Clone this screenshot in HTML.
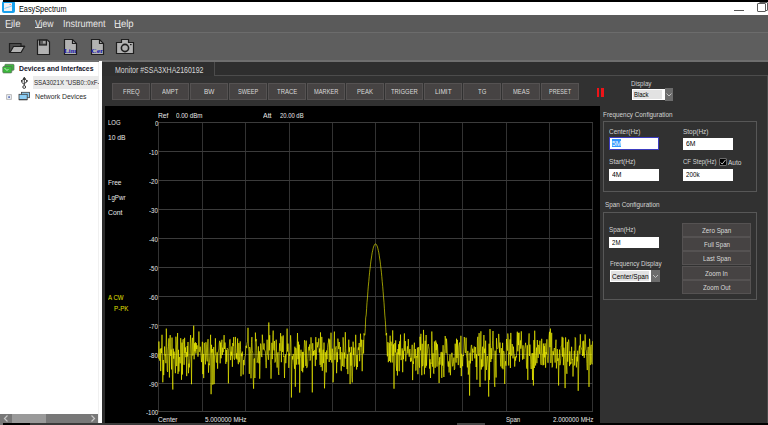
<!DOCTYPE html>
<html><head><meta charset="utf-8"><style>
html,body{margin:0;padding:0}
body{width:768px;height:425px;overflow:hidden;position:relative;background:#333;font-family:"Liberation Sans",sans-serif}
.a{position:absolute}
.t{position:absolute;white-space:pre;line-height:1;transform-origin:0 0;font-family:"Liberation Sans",sans-serif}
.btn{position:absolute;background:#464343;border:1px solid #555252;box-sizing:border-box}
.inp{position:absolute;background:#fff;box-sizing:border-box}
</style></head><body>
<!-- top black strip -->
<!-- title bar -->
<div class="a" style="left:0;top:0;width:768px;height:15px;background:#fff"></div>
<div class="a" style="left:2px;top:1px;width:13px;height:12px;background:#18a0ec;border-radius:2px"></div>
<div class="a" style="left:4px;top:3px;width:8px;height:8px;background:#f2efef"></div>
<svg class="a" style="left:4px;top:3px" width="8" height="8"><path d="M0.5,5.5 L3,4.5 L5,4 L8,2.8" stroke="#6ac0f0" stroke-width="0.8" fill="none"/><rect x="5.5" y="1" width="1.5" height="0.8" fill="#f08080"/></svg>
<div class="a" style="left:734px;top:10px;width:10px;height:1px;background:#555"></div>
<div class="a" style="left:759px;top:2px;width:7px;height:7px;border:1px solid #5a5a5a;border-radius:1px"></div>
<div class="a" style="left:757px;top:3px;width:7px;height:7px;border:1px solid #5a5a5a;background:#fff;border-radius:1px"></div>
<div class="a" style="left:3px;top:0;width:765px;height:2px;background:#000"></div>
<!-- menu bar -->
<div class="a" style="left:0;top:15px;width:768px;height:17px;background:#5a5a5a"></div>
<div class="a" style="left:6px;top:27px;width:6px;height:1px;background:#e0e0e0"></div>
<div class="a" style="left:35px;top:27px;width:7px;height:1px;background:#e0e0e0"></div>
<div class="a" style="left:115px;top:27px;width:6px;height:1px;background:#e0e0e0"></div>
<div class="a" style="left:0;top:32px;width:768px;height:1px;background:#6c6c6c"></div>
<!-- toolbar -->
<div class="a" style="left:0;top:33px;width:768px;height:27px;background:#5e5e5e"></div>
<div class="a" style="left:0;top:60px;width:768px;height:2px;background:#6e6e6e"></div>
<!-- toolbar icons -->
<svg class="a" style="left:0;top:33px" width="140" height="27" viewBox="0 0 140 27">
 <g stroke="#1e1e1e" stroke-width="1.2" fill="#b2b2b2" stroke-linejoin="miter">
  <path d="M9.5,19.5 L9.5,10.5 L21,10.5 L21,13 L24,13 L20.5,19.5 Z" fill="#4a4a4a"/>
  <path d="M10,19.5 L13.5,13.5 L24.5,13.5 L21,19.5 Z"/>
  <path d="M37.5,7 L47.5,7 L49.5,9 L49.5,21.5 L37.5,21.5 Z"/>
  <rect x="39.5" y="7" width="7" height="5" fill="#5c5c5c"/>
  <path d="M64.5,6.5 L72.5,6.5 L76.5,10.5 L76.5,21.5 L64.5,21.5 Z"/>
  <path d="M72.5,6.5 L72.5,10.5 L76.5,10.5" fill="none"/>
  <path d="M91.5,6.5 L99.5,6.5 L103.5,10.5 L103.5,21.5 L91.5,21.5 Z"/>
  <path d="M99.5,6.5 L99.5,10.5 L103.5,10.5" fill="none"/>
  <path d="M116.5,9.5 L121.5,9.5 L121.5,6.5 L128.5,6.5 L128.5,9.5 L133.5,9.5 L133.5,20.5 L116.5,20.5 Z"/>
  <circle cx="125" cy="15" r="3.6" fill="#b2b2b2" stroke-width="1.6"/>
 </g>
 <rect x="43" y="8" width="2.5" height="2.5" fill="#a4a4a4"/>
 <rect x="130" y="11" width="1.6" height="1.2" fill="#1e1e1e"/>
 <text x="64.3" y="20.2" font-family="Liberation Serif" font-weight="700" font-size="6.6" fill="#1616a8" textLength="12" lengthAdjust="spacingAndGlyphs">Lim</text>
 <text x="91.3" y="20.2" font-family="Liberation Serif" font-weight="700" font-size="6.6" fill="#1616a8" textLength="12" lengthAdjust="spacingAndGlyphs">Cer</text>
</svg>
<!-- left panel -->
<div class="a" style="left:0;top:62px;width:98px;height:352px;background:#fff"></div>
<div class="a" style="left:98px;top:62px;width:1px;height:361px;background:#f0f0f0"></div>
<div class="a" style="left:99px;top:61px;width:3px;height:362px;background:#fff"></div>
<div class="a" style="left:33px;top:76px;width:66px;height:13px;background:#ebebeb"></div>
<!-- scrollbar -->
<div class="a" style="left:0;top:414px;width:98px;height:9px;background:#787878"></div>
<div class="a" style="left:12px;top:414px;width:34px;height:9px;background:#9a9a9a"></div>
<svg class="a" style="left:0;top:414px" width="98" height="9"><path d="M7.5,1.5 L4.5,4.5 L7.5,7.5 M91.5,1.5 L94.5,4.5 L91.5,7.5" stroke="#c8c8c8" stroke-width="1.2" fill="none"/></svg>
<!-- tree icons -->
<svg class="a" style="left:0;top:62px" width="34" height="40" viewBox="0 0 34 40">
 <rect x="4.8" y="2.3" width="9.2" height="6" rx="0.8" fill="#3fb43f" stroke="#5a6a5a" stroke-width="0.7"/>
 <rect x="2.8" y="4.5" width="9" height="6.4" rx="0.8" fill="#3cb83c" stroke="#5a6a5a" stroke-width="0.7"/>
 <path d="M4.5,6 L7,8.5 L8.5,7" stroke="#d8f8d8" stroke-width="0.9" fill="none"/>
 <g stroke="#3a3a3a" stroke-width="1" fill="none">
  <path d="M24.3,16.5 L24.3,23.5"/>
  <path d="M22.8,17.5 L24.3,15.2 L25.8,17.5 Z" fill="#3a3a3a"/>
  <path d="M21.8,18.5 L21.8,20.5 L24.3,22.5"/>
  <path d="M26.8,18.5 L26.8,20 L24.3,21.5"/>
  <circle cx="24.2" cy="25" r="1.4"/>
 </g>
 <rect x="21" y="18" width="1.6" height="1.6" fill="#3a3a3a"/>
 <rect x="26" y="18" width="1.6" height="1.6" fill="#3a3a3a"/>
 <rect x="6.7" y="32.7" width="4.6" height="4.6" fill="#eef2f8" stroke="#a8a8a8" stroke-width="0.8"/>
 <rect x="8.2" y="34.3" width="1.8" height="1.6" fill="#5a70b8"/>
 <rect x="21.5" y="30.3" width="8" height="5.4" fill="#8ccdf4" stroke="#3c3c3c" stroke-width="0.8"/>
 <rect x="19" y="32.3" width="8.2" height="5.4" fill="#8ccdf4" stroke="#3c3c3c" stroke-width="0.8"/>
 <rect x="19" y="37.3" width="8.2" height="0.9" fill="#3c3c3c"/>
</svg>
<!-- main dark area -->
<div class="a" style="left:102px;top:62px;width:666px;height:361px;background:#2f2f2f"></div>
<div class="a" style="left:215px;top:62px;width:553px;height:13px;background:#2e2e2e"></div>
<div class="a" style="left:214px;top:62px;width:1px;height:14px;background:#4c4c4c"></div>
<div class="a" style="left:214px;top:75px;width:554px;height:1px;background:#4c4c4c"></div>
<div class="a" style="left:102px;top:76px;width:666px;height:347px;background:#313131"></div>
<div class="a" style="left:102px;top:106px;width:3px;height:317px;background:#2c2c2c"></div>
<div class="a" style="left:767px;top:76px;width:1px;height:347px;background:#4a4a4a"></div>
<!-- buttons -->
<div class="btn" style="left:112px;top:83px;width:38px;height:17px"></div>
<div class="btn" style="left:151px;top:83px;width:38px;height:17px"></div>
<div class="btn" style="left:190px;top:83px;width:38px;height:17px"></div>
<div class="btn" style="left:229px;top:83px;width:38px;height:17px"></div>
<div class="btn" style="left:268px;top:83px;width:38px;height:17px"></div>
<div class="btn" style="left:307px;top:83px;width:38px;height:17px"></div>
<div class="btn" style="left:346px;top:83px;width:38px;height:17px"></div>
<div class="btn" style="left:385px;top:83px;width:38px;height:17px"></div>
<div class="btn" style="left:424px;top:83px;width:38px;height:17px"></div>
<div class="btn" style="left:463px;top:83px;width:38px;height:17px"></div>
<div class="btn" style="left:502px;top:83px;width:38px;height:17px"></div>
<div class="btn" style="left:541px;top:83px;width:38px;height:17px"></div>
<!-- pause -->
<div class="a" style="left:597px;top:88px;width:2px;height:9px;background:#ee1418"></div>
<div class="a" style="left:601px;top:88px;width:3px;height:9px;background:#ee1418"></div>
<!-- display combo -->
<div class="a" style="left:632px;top:89px;width:33px;height:11px;background:#fff"></div>
<div class="a" style="left:633px;top:90px;width:29px;height:9px;background:#e2e2e2"></div>
<div class="a" style="left:665px;top:88px;width:8px;height:13px;background:#6c6c6c"></div>
<svg class="a" style="left:665px;top:88px" width="8" height="13"><path d="M1.5,5.5 L4,8 L6.5,5.5" stroke="#c8c8c8" stroke-width="0.9" fill="none"/></svg>
<svg class="a" style="left:105px;top:106px" width="495" height="317" viewBox="0 0 495 317">
<rect width="495" height="317" fill="#000"/>
<g fill="#3b3b3b"><rect x="53" y="16" width="1" height="290" fill="#323232"/><rect x="97" y="16" width="1" height="290" fill="#323232"/><rect x="140" y="16" width="1" height="290" fill="#323232"/><rect x="184" y="16" width="1" height="290" fill="#323232"/><rect x="227" y="16" width="1" height="290" fill="#323232"/><rect x="270" y="16" width="1" height="290" fill="#323232"/><rect x="314" y="16" width="1" height="290" fill="#323232"/><rect x="357" y="16" width="1" height="290" fill="#323232"/><rect x="401" y="16" width="1" height="290" fill="#323232"/><rect x="444" y="16" width="1" height="290" fill="#323232"/><rect x="487" y="16" width="1" height="290" fill="#323232"/><rect x="53" y="16" width="435" height="1"/><rect x="53" y="45" width="435" height="1"/><rect x="53" y="74" width="435" height="1"/><rect x="53" y="103" width="435" height="1"/><rect x="53" y="132" width="435" height="1"/><rect x="53" y="161" width="435" height="1"/><rect x="53" y="190" width="435" height="1"/><rect x="53" y="219" width="435" height="1"/><rect x="53" y="248" width="435" height="1"/><rect x="53" y="277" width="435" height="1"/><rect x="53" y="305" width="435" height="1"/></g>
<polyline fill="none" stroke="#ffff00" stroke-width="0.6" stroke-linejoin="round" points="53.5,252.7 53.9,235.5 54.4,251.6 54.8,254.7 55.2,242.9 55.7,265.1 56.1,242.1 56.5,247.2 57.0,228.8 57.4,248.9 57.8,276.3 58.3,254.0 58.7,269.1 59.1,256.9 59.6,240.5 60.0,249.4 60.5,248.5 60.9,257.2 61.3,222.6 61.8,240.6 62.2,264.4 62.6,265.9 63.1,244.1 63.5,240.3 63.9,232.4 64.4,271.5 64.8,236.5 65.2,229.1 65.7,249.9 66.1,243.6 66.5,263.4 67.0,231.6 67.4,268.8 67.8,283.5 68.3,242.7 68.7,252.7 69.1,245.6 69.6,249.3 70.0,258.9 70.4,267.2 70.9,230.7 71.3,238.1 71.7,260.1 72.2,239.9 72.6,227.0 73.0,267.9 73.5,243.8 73.9,265.5 74.4,251.8 74.8,251.0 75.2,257.3 75.7,232.2 76.1,239.2 76.5,273.8 77.0,236.6 77.4,268.5 77.8,234.1 78.3,233.2 78.7,238.3 79.1,258.8 79.6,231.8 80.0,246.8 80.4,241.4 80.9,251.2 81.3,246.1 81.7,270.1 82.2,240.0 82.6,250.5 83.0,236.0 83.5,267.2 83.9,257.7 84.3,261.4 84.8,252.2 85.2,237.8 85.6,229.1 86.1,247.3 86.5,278.2 87.0,236.5 87.4,231.8 87.8,249.6 88.3,245.7 88.7,219.7 89.1,253.3 89.6,237.2 90.0,245.4 90.4,236.2 90.9,247.6 91.3,237.1 91.7,243.0 92.2,239.4 92.6,250.0 93.0,250.7 93.5,249.4 93.9,225.5 94.3,245.8 94.8,245.5 95.2,240.7 95.6,244.8 96.1,251.0 96.5,256.1 96.9,247.0 97.4,235.8 97.8,268.1 98.2,247.9 98.7,272.1 99.1,236.8 99.6,237.7 100.0,248.4 100.4,258.4 100.9,236.2 101.3,238.4 101.7,251.8 102.2,255.4 102.6,240.2 103.0,233.2 103.5,266.7 103.9,257.5 104.3,259.2 104.8,250.0 105.2,240.7 105.6,228.8 106.1,288.2 106.5,238.8 106.9,246.6 107.4,243.0 107.8,278.7 108.2,257.3 108.7,241.1 109.1,278.1 109.5,249.9 110.0,248.8 110.4,232.3 110.8,247.6 111.3,256.4 111.7,256.5 112.1,246.4 112.6,262.7 113.0,247.1 113.5,244.6 113.9,243.0 114.3,236.8 114.8,234.8 115.2,257.3 115.6,236.5 116.1,252.3 116.5,238.5 116.9,233.8 117.4,249.0 117.8,241.7 118.2,246.2 118.7,237.2 119.1,229.1 119.5,243.0 120.0,236.5 120.4,239.8 120.8,257.9 121.3,244.0 121.7,255.8 122.1,242.1 122.6,242.6 123.0,243.1 123.4,277.3 123.9,246.0 124.3,240.6 124.7,233.6 125.2,233.3 125.6,254.1 126.1,245.7 126.5,249.5 126.9,240.4 127.4,260.8 127.8,237.1 128.2,240.1 128.7,231.1 129.1,252.2 129.5,253.7 130.0,250.8 130.4,230.9 130.8,242.5 131.3,252.6 131.7,247.3 132.1,253.6 132.6,232.5 133.0,256.4 133.4,258.2 133.9,237.1 134.3,256.3 134.7,250.3 135.2,235.4 135.6,243.5 136.0,270.2 136.5,247.5 136.9,250.2 137.3,245.6 137.8,254.8 138.2,268.5 138.6,254.0 139.1,259.2 139.5,254.0 140.0,249.8 140.4,249.5 140.8,240.0 141.3,239.7 141.7,242.1 142.1,237.0 142.6,235.6 143.0,221.8 143.4,238.0 143.9,245.8 144.3,267.9 144.7,241.0 145.2,243.0 145.6,247.6 146.0,272.3 146.5,236.4 146.9,231.1 147.3,244.5 147.8,247.5 148.2,273.3 148.6,282.7 149.1,253.1 149.5,252.4 149.9,272.0 150.4,226.6 150.8,235.3 151.2,233.1 151.7,244.2 152.1,256.7 152.6,254.6 153.0,251.0 153.4,240.4 153.9,257.3 154.3,245.3 154.7,272.7 155.2,254.7 155.6,237.6 156.0,239.5 156.5,249.9 156.9,251.1 157.3,228.7 157.8,236.4 158.2,243.6 158.6,241.9 159.1,237.4 159.5,244.1 159.9,244.2 160.4,246.0 160.8,256.6 161.2,262.1 161.7,249.5 162.1,233.7 162.5,248.4 163.0,248.6 163.4,253.8 163.8,216.5 164.3,244.3 164.7,229.2 165.1,245.3 165.6,259.8 166.0,272.7 166.5,261.1 166.9,236.8 167.3,253.1 167.8,231.2 168.2,224.6 168.6,242.1 169.1,244.4 169.5,235.0 169.9,256.5 170.4,255.5 170.8,250.6 171.2,233.7 171.7,251.1 172.1,261.6 172.5,248.8 173.0,246.3 173.4,265.5 173.8,268.9 174.3,244.6 174.7,237.3 175.1,244.9 175.6,227.1 176.0,236.8 176.4,256.2 176.9,230.4 177.3,234.4 177.7,246.0 178.2,229.4 178.6,250.9 179.1,250.1 179.5,272.0 179.9,254.1 180.4,248.3 180.8,257.2 181.2,251.8 181.7,243.6 182.1,222.6 182.5,245.5 183.0,237.6 183.4,243.3 183.8,261.9 184.3,247.6 184.7,249.7 185.1,244.7 185.6,229.3 186.0,236.1 186.4,291.5 186.9,258.6 187.3,250.1 187.7,253.5 188.2,247.9 188.6,249.8 189.0,256.2 189.5,262.8 189.9,240.7 190.3,280.8 190.8,242.1 191.2,244.0 191.7,258.7 192.1,242.1 192.5,227.0 193.0,253.2 193.4,235.7 193.8,258.5 194.3,238.7 194.7,286.6 195.1,252.5 195.6,247.6 196.0,243.7 196.4,248.5 196.9,265.0 197.3,245.9 197.7,266.3 198.2,245.9 198.6,261.6 199.0,246.6 199.5,234.2 199.9,236.3 200.3,242.4 200.8,259.9 201.2,234.6 201.6,261.8 202.1,261.6 202.5,260.1 202.9,252.6 203.4,242.7 203.8,240.8 204.2,244.4 204.7,238.4 205.1,254.6 205.6,252.4 206.0,231.3 206.4,242.4 206.9,243.1 207.3,286.4 207.7,237.2 208.2,249.7 208.6,245.0 209.0,249.1 209.5,244.2 209.9,244.2 210.3,260.1 210.8,231.1 211.2,253.7 211.6,246.1 212.1,236.2 212.5,241.3 212.9,239.9 213.4,237.9 213.8,232.4 214.2,246.5 214.7,242.5 215.1,258.9 215.5,226.4 216.0,261.1 216.4,258.7 216.8,230.9 217.3,264.8 217.7,249.1 218.2,243.7 218.6,257.1 219.0,236.6 219.5,282.3 219.9,270.9 220.3,246.2 220.8,251.3 221.2,266.4 221.6,244.5 222.1,253.2 222.5,241.8 222.9,238.0 223.4,236.2 223.8,232.5 224.2,256.0 224.7,233.5 225.1,242.5 225.5,254.1 226.0,226.7 226.4,248.7 226.8,256.5 227.3,242.7 227.7,246.4 228.1,276.3 228.6,264.0 229.0,239.0 229.4,225.6 229.9,253.8 230.3,243.9 230.7,241.6 231.2,240.3 231.6,267.2 232.1,246.3 232.5,256.1 232.9,232.6 233.4,239.7 233.8,243.1 234.2,236.0 234.7,241.3 235.1,253.4 235.5,241.0 236.0,264.6 236.4,264.9 236.8,246.3 237.3,247.5 237.7,260.1 238.1,231.3 238.6,241.1 239.0,261.0 239.4,246.5 239.9,252.5 240.3,226.2 240.7,242.6 241.2,250.4 241.6,253.6 242.0,263.1 242.5,248.3 242.9,268.1 243.3,245.6 243.8,233.7 244.2,245.9 244.7,241.3 245.1,278.1 245.5,246.6 246.0,259.7 246.4,240.8 246.8,270.2 247.3,276.4 247.7,259.5 248.1,235.7 248.6,249.1 249.0,241.6 249.4,260.6 249.9,259.3 250.3,247.0 250.7,228.8 251.2,248.6 251.6,263.5 252.0,249.0 252.5,261.0 252.9,243.1 253.3,241.4 253.8,244.1 254.2,237.0 254.6,255.2 255.1,246.4 255.5,227.7 255.9,240.8 256.4,233.7 256.8,249.5 257.2,265.2 257.7,245.6 258.1,233.9 258.6,247.5 259.0,227.4 259.4,229.2 259.9,229.2 260.3,222.6 260.7,211.8 261.2,208.9 261.6,202.7 262.0,196.6 262.5,191.1 262.9,185.4 263.3,180.2 263.8,175.3 264.2,170.5 264.6,166.3 265.1,162.2 265.5,158.5 265.9,155.1 266.4,152.0 266.8,149.2 267.2,146.7 267.7,144.5 268.1,142.7 268.5,141.1 269.0,139.9 269.4,138.9 269.8,138.3 270.3,138.0 270.7,138.0 271.2,138.3 271.6,138.9 272.0,139.9 272.5,141.1 272.9,142.7 273.3,144.5 273.8,146.7 274.2,149.2 274.6,152.0 275.1,155.1 275.5,158.5 275.9,162.2 276.4,166.3 276.8,170.6 277.2,175.3 277.7,180.3 278.1,185.5 278.5,190.7 279.0,196.6 279.4,202.7 279.8,209.1 280.3,214.4 280.7,221.3 281.1,229.3 281.6,227.0 282.0,244.5 282.4,250.3 282.9,236.1 283.3,256.2 283.8,250.6 284.2,237.1 284.6,255.0 285.1,229.7 285.5,256.4 285.9,235.6 286.4,237.4 286.8,240.7 287.2,256.5 287.7,224.4 288.1,249.7 288.5,238.4 289.0,282.7 289.4,245.9 289.8,237.2 290.3,246.4 290.7,234.4 291.1,257.7 291.6,264.8 292.0,246.5 292.4,269.5 292.9,243.0 293.3,248.5 293.7,238.2 294.2,265.2 294.6,235.3 295.0,249.4 295.5,228.6 295.9,254.0 296.3,253.9 296.8,251.1 297.2,242.4 297.7,266.2 298.1,244.6 298.5,253.2 299.0,237.4 299.4,227.4 299.8,244.8 300.3,235.1 300.7,255.3 301.1,249.2 301.6,248.7 302.0,243.4 302.4,240.3 302.9,247.6 303.3,233.1 303.7,243.5 304.2,250.7 304.6,243.8 305.0,243.0 305.5,255.7 305.9,251.9 306.3,255.3 306.8,246.3 307.2,238.8 307.6,274.1 308.1,255.4 308.5,257.9 308.9,242.6 309.4,236.7 309.8,252.3 310.3,243.0 310.7,264.6 311.1,264.4 311.6,250.2 312.0,251.5 312.4,241.6 312.9,268.2 313.3,247.3 313.7,241.1 314.2,259.3 314.6,261.7 315.0,230.8 315.5,244.3 315.9,227.8 316.3,245.0 316.8,269.2 317.2,237.8 317.6,260.2 318.1,258.7 318.5,223.9 318.9,244.2 319.4,268.3 319.8,253.1 320.2,234.8 320.7,261.7 321.1,229.0 321.5,259.7 322.0,249.0 322.4,247.2 322.8,239.3 323.3,238.0 323.7,240.5 324.2,243.4 324.6,262.6 325.0,253.2 325.5,272.0 325.9,256.7 326.3,257.6 326.8,225.5 327.2,239.4 327.6,260.7 328.1,247.3 328.5,266.9 328.9,267.7 329.4,235.5 329.8,246.3 330.2,261.8 330.7,234.5 331.1,244.1 331.5,236.7 332.0,260.6 332.4,238.3 332.8,243.9 333.3,254.4 333.7,260.2 334.1,277.0 334.6,251.2 335.0,258.7 335.4,253.4 335.9,246.7 336.3,245.9 336.8,271.9 337.2,246.4 337.6,259.6 338.1,239.2 338.5,262.7 338.9,271.0 339.4,249.8 339.8,242.2 340.2,230.0 340.7,235.9 341.1,247.4 341.5,232.7 342.0,239.1 342.4,249.7 342.8,258.5 343.3,260.7 343.7,255.4 344.1,266.5 344.6,256.4 345.0,248.4 345.4,269.2 345.9,258.8 346.3,251.8 346.7,246.9 347.2,246.9 347.6,260.3 348.0,259.6 348.5,255.5 348.9,251.6 349.3,263.8 349.8,262.6 350.2,237.7 350.7,248.3 351.1,256.6 351.5,232.7 352.0,252.0 352.4,233.9 352.8,249.9 353.3,259.1 353.7,241.1 354.1,238.4 354.6,236.5 355.0,255.0 355.4,261.9 355.9,229.8 356.3,270.1 356.7,247.8 357.2,253.4 357.6,260.2 358.0,249.0 358.5,250.1 358.9,241.1 359.3,231.0 359.8,238.0 360.2,246.3 360.6,247.1 361.1,231.7 361.5,250.2 361.9,252.6 362.4,261.4 362.8,244.9 363.3,268.6 363.7,263.8 364.1,254.7 364.6,289.6 365.0,246.7 365.4,257.4 365.9,243.8 366.3,239.2 366.7,239.0 367.2,254.9 367.6,242.7 368.0,246.3 368.5,246.3 368.9,244.4 369.3,240.5 369.8,252.4 370.2,246.7 370.6,241.1 371.1,261.0 371.5,248.2 371.9,273.7 372.4,234.1 372.8,230.8 373.2,247.5 373.7,249.8 374.1,227.1 374.5,246.4 375.0,280.9 375.4,245.6 375.9,225.3 376.3,263.5 376.7,253.4 377.2,261.2 377.6,240.7 378.0,260.3 378.5,244.1 378.9,229.0 379.3,247.2 379.8,242.6 380.2,274.6 380.6,234.7 381.1,255.8 381.5,263.9 381.9,252.5 382.4,250.0 382.8,256.0 383.2,261.6 383.7,290.6 384.1,237.7 384.5,273.9 385.0,223.1 385.4,239.2 385.8,256.0 386.3,242.2 386.7,253.1 387.1,248.7 387.6,234.3 388.0,225.0 388.4,240.9 388.9,245.9 389.3,275.2 389.8,280.9 390.2,244.7 390.6,254.6 391.1,271.5 391.5,232.2 391.9,242.1 392.4,242.9 392.8,242.4 393.2,241.2 393.7,227.9 394.1,233.2 394.5,246.7 395.0,236.5 395.4,252.0 395.8,260.4 396.3,242.1 396.7,249.5 397.1,262.2 397.6,236.8 398.0,263.3 398.4,245.2 398.9,245.1 399.3,247.8 399.7,277.9 400.2,258.4 400.6,255.2 401.0,259.7 401.5,233.0 401.9,238.4 402.4,244.6 402.8,227.5 403.2,231.8 403.7,259.5 404.1,246.7 404.5,247.9 405.0,233.4 405.4,262.0 405.8,226.9 406.3,249.6 406.7,249.3 407.1,238.0 407.6,239.8 408.0,252.4 408.4,240.7 408.9,247.4 409.3,248.4 409.7,260.6 410.2,251.0 410.6,254.6 411.0,249.9 411.5,251.3 411.9,234.9 412.3,225.7 412.8,245.3 413.2,226.9 413.6,239.1 414.1,226.7 414.5,255.7 414.9,240.6 415.4,234.4 415.8,242.7 416.3,225.3 416.7,239.0 417.1,242.2 417.6,253.7 418.0,239.3 418.4,249.3 418.9,252.9 419.3,243.2 419.7,242.6 420.2,239.8 420.6,236.8 421.0,242.7 421.5,261.6 421.9,262.7 422.3,239.3 422.8,273.9 423.2,240.1 423.6,237.1 424.1,227.4 424.5,249.9 424.9,238.6 425.4,248.3 425.8,258.4 426.2,263.0 426.7,249.8 427.1,247.2 427.5,274.0 428.0,247.2 428.4,279.5 428.9,234.1 429.3,262.0 429.7,224.7 430.2,245.4 430.6,259.5 431.0,249.8 431.5,241.6 431.9,257.2 432.3,234.0 432.8,246.8 433.2,251.9 433.6,238.9 434.1,239.9 434.5,247.9 434.9,234.7 435.4,245.1 435.8,257.6 436.2,258.9 436.7,232.8 437.1,247.2 437.5,248.1 438.0,259.3 438.4,237.5 438.8,258.9 439.3,240.1 439.7,251.4 440.1,237.4 440.6,261.7 441.0,246.0 441.4,248.2 441.9,233.3 442.3,249.7 442.8,256.6 443.2,256.8 443.6,248.2 444.1,229.8 444.5,225.8 444.9,241.2 445.4,222.6 445.8,256.9 446.2,248.8 446.7,226.8 447.1,261.4 447.5,260.1 448.0,245.2 448.4,249.1 448.8,245.2 449.3,242.0 449.7,243.7 450.1,256.6 450.6,239.6 451.0,233.7 451.4,262.4 451.9,253.7 452.3,243.1 452.7,254.9 453.2,252.4 453.6,279.5 454.0,254.7 454.5,243.6 454.9,259.2 455.4,257.4 455.8,252.8 456.2,240.1 456.7,240.1 457.1,230.8 457.5,250.6 458.0,231.7 458.4,259.2 458.8,241.7 459.3,245.5 459.7,253.9 460.1,282.1 460.6,231.4 461.0,240.2 461.4,259.1 461.9,267.8 462.3,235.9 462.7,255.7 463.2,238.0 463.6,233.6 464.0,236.9 464.5,260.1 464.9,245.3 465.3,258.5 465.8,256.3 466.2,257.5 466.6,240.8 467.1,254.1 467.5,253.2 468.0,270.5 468.4,261.3 468.8,256.0 469.3,244.8 469.7,259.5 470.1,231.4 470.6,232.0 471.0,251.1 471.4,261.4 471.9,250.7 472.3,255.4 472.7,244.7 473.2,284.8 473.6,267.1 474.0,242.8 474.5,239.6 474.9,247.8 475.3,228.3 475.8,241.0 476.2,241.7 476.6,243.1 477.1,244.2 477.5,250.0 477.9,235.2 478.4,249.5 478.8,234.7 479.2,251.9 479.7,245.4 480.1,228.4 480.5,236.0 481.0,243.4 481.4,244.8 481.9,257.6 482.3,264.1 482.7,245.5 483.2,240.9 483.6,248.3 484.0,280.9 484.5,232.8 484.9,235.6 485.3,259.1 485.8,240.7 486.2,238.8 486.6,256.5 487.1,258.3 487.5,235.2"/>
</svg>
<!-- right panel groups -->
<div class="a" style="left:603px;top:121px;width:154px;height:71px;border:1px solid #575757;box-sizing:border-box"></div>
<div class="a" style="left:603px;top:212px;width:154px;height:88px;border:1px solid #575757;box-sizing:border-box"></div>
<div class="inp" style="left:609px;top:137px;width:50px;height:13px;border:1px solid #3c3cc0"></div>
<div class="a" style="left:612px;top:139px;width:9px;height:8px;background:#3399ff"></div>
<div class="inp" style="left:683px;top:138px;width:50px;height:12px"></div>
<div class="inp" style="left:609px;top:169px;width:50px;height:12px"></div>
<div class="inp" style="left:683px;top:169px;width:50px;height:12px"></div>
<div class="a" style="left:719px;top:158px;width:8px;height:8px;border:1px solid #6a6a6a;box-sizing:border-box;background:#000;border-radius:1px"></div>
<svg class="a" style="left:719px;top:158px" width="8" height="8"><path d="M1.6,4.6 L3.2,6 L6.6,1.8" stroke="#d8d8d8" stroke-width="0.9" fill="none"/></svg>
<div class="inp" style="left:609px;top:237px;width:50px;height:11px"></div>
<div class="a" style="left:610px;top:270px;width:41px;height:12px;background:#fff"></div>
<div class="a" style="left:611px;top:271px;width:38px;height:10px;background:#e2e2e2"></div>
<div class="a" style="left:651px;top:270px;width:9px;height:12px;background:#6c6c6c"></div>
<svg class="a" style="left:651px;top:270px" width="9" height="12"><path d="M2,5 L4.5,7.5 L7,5" stroke="#c8c8c8" stroke-width="0.9" fill="none"/></svg>
<div class="btn" style="left:682px;top:223px;width:69px;height:14px"></div>
<div class="btn" style="left:682px;top:237px;width:69px;height:14px"></div>
<div class="btn" style="left:682px;top:251px;width:69px;height:14px"></div>
<div class="btn" style="left:682px;top:266px;width:69px;height:14px"></div>
<div class="btn" style="left:682px;top:280px;width:69px;height:14px"></div>
<!-- bottom strip -->
<div class="a" style="left:0;top:423px;width:768px;height:2px;background:#000"></div>
<div class="a" style="left:0;top:423px;width:3px;height:2px;background:#777"></div>
<div class="a" style="left:30px;top:423px;width:200px;height:2px;background:#3a3a3a"></div>
<div class="a" style="left:457px;top:423px;width:28px;height:2px;background:#444"></div>
<div class="t" style="left:19.000px;top:4.605px;font-size:8.8px;color:#000;transform:scaleX(0.8304)">EasySpectrum</div>
<div class="t" style="left:5.000px;top:20.383px;font-size:10.2px;color:#e8e8e8;transform:scaleX(0.9509);text-rendering:geometricPrecision">File</div>
<div class="t" style="left:35.000px;top:20.383px;font-size:10.2px;color:#e8e8e8;transform:scaleX(0.8456);text-rendering:geometricPrecision">View</div>
<div class="t" style="left:63.000px;top:20.383px;font-size:10.2px;color:#e8e8e8;transform:scaleX(0.8841);text-rendering:geometricPrecision">Instrument</div>
<div class="t" style="left:114.000px;top:20.383px;font-size:10.2px;color:#e8e8e8;transform:scaleX(0.9349);text-rendering:geometricPrecision">Help</div>
<div class="t" style="left:19.000px;top:64.795px;font-size:7.6px;color:#14142a;transform:scaleX(0.9051);font-weight:700">Devices and Interfaces</div>
<div class="a" style="left:0;top:0;width:99px;height:425px;overflow:hidden"><div class="t" style="left:34.000px;top:78.795px;font-size:7.6px;color:#2a2a2a;transform:scaleX(0.8066)">SSA3021X "USB0::0xF-</div></div>
<div class="t" style="left:35.000px;top:92.795px;font-size:7.6px;color:#2a2a2a;transform:scaleX(0.9040)">Network Devices</div>
<div class="t" style="left:115.000px;top:65.669px;font-size:8.4px;color:#d8d8d8;transform:scaleX(0.8337)">Monitor #SSA3XHA2160192</div>
<div class="t" style="left:122.700px;top:87.859px;font-size:7.2px;color:#dadada;transform:scaleX(0.8313)">FREQ</div>
<div class="t" style="left:162.400px;top:87.859px;font-size:7.2px;color:#dadada;transform:scaleX(0.8113)">AMPT</div>
<div class="t" style="left:204.300px;top:87.859px;font-size:7.2px;color:#dadada;transform:scaleX(0.8982)">BW</div>
<div class="t" style="left:238.350px;top:87.859px;font-size:7.2px;color:#dadada;transform:scaleX(0.7817)">SWEEP</div>
<div class="t" style="left:277.400px;top:87.859px;font-size:7.2px;color:#dadada;transform:scaleX(0.8287)">TRACE</div>
<div class="t" style="left:314.300px;top:87.859px;font-size:7.2px;color:#dadada;transform:scaleX(0.7931)">MARKER</div>
<div class="t" style="left:356.550px;top:87.859px;font-size:7.2px;color:#dadada;transform:scaleX(0.8287)">PEAK</div>
<div class="t" style="left:390.600px;top:87.859px;font-size:7.2px;color:#dadada;transform:scaleX(0.8194)">TRIGGER</div>
<div class="t" style="left:434.700px;top:87.859px;font-size:7.2px;color:#dadada;transform:scaleX(0.9034)">LIMIT</div>
<div class="t" style="left:478.350px;top:87.859px;font-size:7.2px;color:#dadada;transform:scaleX(0.8313)">TG</div>
<div class="t" style="left:512.750px;top:87.859px;font-size:7.2px;color:#dadada;transform:scaleX(0.8112)">MEAS</div>
<div class="t" style="left:548.500px;top:87.859px;font-size:7.2px;color:#dadada;transform:scaleX(0.7648)">PRESET</div>
<div class="t" style="left:631.000px;top:79.859px;font-size:7.2px;color:#d0d0d0;transform:scaleX(0.8694)">Display</div>
<div class="t" style="left:634.000px;top:90.859px;font-size:7.2px;color:#000;transform:scaleX(0.8249)">Black</div>
<div class="t" style="left:108.000px;top:118.891px;font-size:7px;color:#e8e8e8;transform:scaleX(0.8448)">LOG</div>
<div class="t" style="left:108.000px;top:133.891px;font-size:7px;color:#e8e8e8;transform:scaleX(0.9619)">10 dB</div>
<div class="t" style="left:108.000px;top:178.891px;font-size:7px;color:#e8e8e8;transform:scaleX(0.9371)">Free</div>
<div class="t" style="left:108.000px;top:193.891px;font-size:7px;color:#e8e8e8;transform:scaleX(0.8819)">LgPwr</div>
<div class="t" style="left:108.000px;top:208.891px;font-size:7px;color:#e8e8e8;transform:scaleX(0.9799)">Cont</div>
<div class="t" style="left:108.000px;top:293.890px;font-size:7px;color:#e0e000;transform:scaleX(0.8680)">A CW</div>
<div class="t" style="left:114.000px;top:304.890px;font-size:7px;color:#e0e000;transform:scaleX(0.8872)">P-PK</div>
<div class="t" style="left:158.000px;top:111.891px;font-size:7px;color:#e8e8e8;transform:scaleX(0.9628)">Ref</div>
<div class="t" style="left:176.000px;top:111.891px;font-size:7px;color:#e8e8e8;transform:scaleX(0.8843)">0.00 dBm</div>
<div class="t" style="left:263.000px;top:111.891px;font-size:7px;color:#e8e8e8;transform:scaleX(0.9927)">Att</div>
<div class="t" style="left:280.000px;top:111.891px;font-size:7px;color:#e8e8e8;transform:scaleX(0.8405)">20.00 dB</div>
<div class="t" style="left:154.602px;top:119.891px;font-size:7px;color:#e8e8e8;transform:scaleX(0.8700)">0</div>
<div class="t" style="left:149.191px;top:148.891px;font-size:7px;color:#e8e8e8;transform:scaleX(0.8700)">-10</div>
<div class="t" style="left:149.191px;top:177.891px;font-size:7px;color:#e8e8e8;transform:scaleX(0.8700)">-20</div>
<div class="t" style="left:149.191px;top:206.891px;font-size:7px;color:#e8e8e8;transform:scaleX(0.8700)">-30</div>
<div class="t" style="left:149.191px;top:235.891px;font-size:7px;color:#e8e8e8;transform:scaleX(0.8700)">-40</div>
<div class="t" style="left:149.191px;top:264.890px;font-size:7px;color:#e8e8e8;transform:scaleX(0.8700)">-50</div>
<div class="t" style="left:149.191px;top:293.890px;font-size:7px;color:#e8e8e8;transform:scaleX(0.8700)">-60</div>
<div class="t" style="left:149.191px;top:322.890px;font-size:7px;color:#e8e8e8;transform:scaleX(0.8700)">-70</div>
<div class="t" style="left:149.191px;top:351.890px;font-size:7px;color:#e8e8e8;transform:scaleX(0.8700)">-80</div>
<div class="t" style="left:149.191px;top:380.890px;font-size:7px;color:#e8e8e8;transform:scaleX(0.8700)">-90</div>
<div class="t" style="left:145.806px;top:408.890px;font-size:7px;color:#e8e8e8;transform:scaleX(0.8700)">-100</div>
<div class="t" style="left:158.000px;top:415.890px;font-size:7px;color:#e8e8e8;transform:scaleX(0.9279)">Center</div>
<div class="t" style="left:205.000px;top:415.890px;font-size:7px;color:#e8e8e8;transform:scaleX(0.9115)">5.000000 MHz</div>
<div class="t" style="left:506.000px;top:415.890px;font-size:7px;color:#e8e8e8;transform:scaleX(0.8700)">Span</div>
<div class="t" style="left:552.600px;top:415.890px;font-size:7px;color:#e8e8e8;transform:scaleX(0.8873)">2.000000 MHz</div>
<div class="t" style="left:603.000px;top:110.859px;font-size:7.2px;color:#d4d4d4;transform:scaleX(0.8829)">Frequency Configuration</div>
<div class="t" style="left:609.000px;top:127.859px;font-size:7.2px;color:#d4d4d4;transform:scaleX(0.8960)">Center(Hz)</div>
<div class="t" style="left:683.000px;top:127.859px;font-size:7.2px;color:#d4d4d4;transform:scaleX(0.8992)">Stop(Hz)</div>
<div class="t" style="left:609.000px;top:157.859px;font-size:7.2px;color:#d4d4d4;transform:scaleX(0.9217)">Start(Hz)</div>
<div class="t" style="left:683.000px;top:157.859px;font-size:7.2px;color:#d4d4d4;transform:scaleX(0.8388)">CF Step(Hz)</div>
<div class="t" style="left:728.000px;top:158.859px;font-size:7.2px;color:#d4d4d4;transform:scaleX(0.9124)">Auto</div>
<div class="t" style="left:612.000px;top:139.859px;font-size:7.2px;color:#ffffff;transform:scaleX(0.9500)">5M</div>
<div class="t" style="left:686.000px;top:139.859px;font-size:7.2px;color:#000;transform:scaleX(0.9500)">6M</div>
<div class="t" style="left:612.000px;top:170.859px;font-size:7.2px;color:#000;transform:scaleX(0.9500)">4M</div>
<div class="t" style="left:686.000px;top:170.859px;font-size:7.2px;color:#000;transform:scaleX(0.8679)">200k</div>
<div class="t" style="left:605.000px;top:200.859px;font-size:7.2px;color:#d4d4d4;transform:scaleX(0.8855)">Span Configuration</div>
<div class="t" style="left:609.000px;top:225.859px;font-size:7.2px;color:#d4d4d4;transform:scaleX(0.8729)">Span(Hz)</div>
<div class="t" style="left:612.000px;top:238.859px;font-size:7.2px;color:#000;transform:scaleX(0.8500)">2M</div>
<div class="t" style="left:610.000px;top:259.859px;font-size:7.2px;color:#d4d4d4;transform:scaleX(0.8653)">Frequency Display</div>
<div class="t" style="left:612.000px;top:272.859px;font-size:7.2px;color:#000;transform:scaleX(0.9044)">Center/Span</div>
<div class="t" style="left:702.350px;top:226.859px;font-size:7.2px;color:#dadada;transform:scaleX(0.8730)">Zero Span</div>
<div class="t" style="left:703.500px;top:240.859px;font-size:7.2px;color:#dadada;transform:scaleX(0.8560)">Full Span</div>
<div class="t" style="left:702.579px;top:254.859px;font-size:7.2px;color:#dadada;transform:scaleX(0.8600)">Last Span</div>
<div class="t" style="left:704.659px;top:269.859px;font-size:7.2px;color:#dadada;transform:scaleX(0.8600)">Zoom In</div>
<div class="t" style="left:703.253px;top:283.859px;font-size:7.2px;color:#dadada;transform:scaleX(0.8600)">Zoom Out</div>

</body></html>
